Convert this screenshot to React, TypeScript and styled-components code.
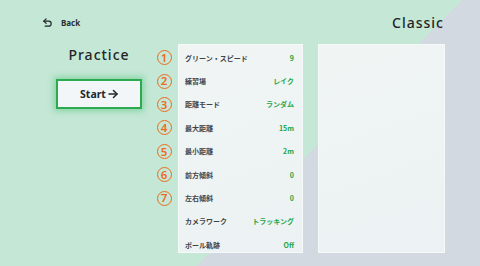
import React from 'react';
import styled, { createGlobalStyle } from 'styled-components';

const GlobalStyle = createGlobalStyle`
  html, body {
    margin: 0;
    padding: 0;
  }
  body {
    font-family: "Noto Sans", "Noto Sans CJK JP", sans-serif;
    color: #22272b;
  }
`;

const Page = styled.div`
  width: 480px;
  height: 266px;
  overflow: hidden;
  background: linear-gradient(135deg, #c4e7d6 0%, #c4e7d6 62%, #d2d9e0 62%, #d2d9e0 100%);
  display: flex;
  flex-direction: column;
`;

const Header = styled.div`
  height: 44px;
  display: flex;
  align-items: center;
  justify-content: space-between;
  padding: 0 36px 0 42px;
`;

const BackButton = styled.div`
  display: flex;
  align-items: center;
  gap: 8px;
  font-size: 8px;
  font-weight: 700;
  color: #2a2f33;
`;

const ModeTitle = styled.div`
  font-size: 14px;
  font-weight: 500;
  letter-spacing: 1px;
  color: #1f2428;
`;

const Body = styled.div`
  display: flex;
  padding-left: 56px;
`;

const StartColumn = styled.div`
  width: 86px;
  display: flex;
  flex-direction: column;
  align-items: center;
  margin-right: 14px;
`;

const SectionTitle = styled.div`
  font-size: 14px;
  font-weight: 500;
  letter-spacing: 1px;
  line-height: 20px;
  margin-top: 1px;
  color: #1f2428;
`;

const StartButton = styled.button`
  margin-top: 14px;
  width: 86px;
  height: 30px;
  background: #f3f6f8;
  border: 2px solid #2daa4f;
  box-shadow: 0 0 6px 2px rgba(60, 190, 100, 0.45);
  font-family: "Noto Sans", sans-serif;
  font-size: 10.5px;
  font-weight: 700;
  color: #22272b;
  display: flex;
  align-items: center;
  justify-content: center;
  gap: 2px;
  padding: 0;
`;

const NumberColumn = styled.div`
  width: 16px;
  padding-top: 2px;
  margin-right: 6px;
`;

const NumberSlot = styled.div`
  height: 23.4px;
  display: flex;
  align-items: center;
  justify-content: center;
`;

const NumberMark = styled.div`
  width: 15px;
  height: 15px;
  box-sizing: border-box;
  border: 1.8px solid #f06a1c;
  border-radius: 50%;
  display: flex;
  align-items: center;
  justify-content: center;
  font-family: "Noto Sans", sans-serif;
  font-size: 11.5px;
  font-weight: 600;
  line-height: 1;
  color: #f06a1c;
`;

const Panel = styled.div<{ $width: number }>`
  width: ${(p) => p.$width}px;
  height: 209px;
  box-sizing: border-box;
  background: linear-gradient(160deg, #f0f5f4 0%, #ecf1f3 100%);
  border: 1px solid #f6f9f9;
  padding-top: 1px;
  overflow: hidden;
  margin-right: 15px;
`;

const Row = styled.div`
  height: 23.4px;
  display: flex;
  align-items: center;
  justify-content: space-between;
  padding: 0 8px 0 6px;
  font-family: "Noto Sans CJK JP", sans-serif;
  font-size: 7px;
`;

const Label = styled.span`
  font-weight: 700;
  color: #3f444a;
`;

const Value = styled.span`
  font-weight: 700;
  color: #22a64a;
`;

const settings: [string, string][] = [
  ['グリーン・スピード', '9'],
  ['練習場', 'レイク'],
  ['距離モード', 'ランダム'],
  ['最大距離', '15m'],
  ['最小距離', '2m'],
  ['前方傾斜', '0'],
  ['左右傾斜', '0'],
  ['カメラワーク', 'トラッキング'],
  ['ボール軌跡', 'Off'],
];

const marks = [1, 2, 3, 4, 5, 6, 7];

const BackIcon = () => (
  <svg width="11" height="11" viewBox="0 0 24 24" fill="none" stroke="#1f2428" strokeWidth="2.6" strokeLinecap="round" strokeLinejoin="round">
    <path d="M9 14 4 9l5-5" />
    <path d="M4 9h10.5a5.5 5.5 0 0 1 5.5 5.5a5.5 5.5 0 0 1-5.5 5.5H7" />
  </svg>
);

const ArrowIcon = () => (
  <svg width="10" height="10" viewBox="0 0 10 10" fill="none" stroke="#22272b" strokeWidth="1.5" strokeLinecap="round" strokeLinejoin="round">
    <path d="M1 5h8" />
    <path d="M5.5 1.5 9 5 5.5 8.5" />
  </svg>
);

const App: React.FC = () => {
  return (
    <>
      <GlobalStyle />
      <Page>
        <Header>
          <BackButton>
            <BackIcon />
            <span>Back</span>
          </BackButton>
          <ModeTitle>Classic</ModeTitle>
        </Header>
        <Body>
          <StartColumn>
            <SectionTitle>Practice</SectionTitle>
            <StartButton>
              Start
              <ArrowIcon />
            </StartButton>
          </StartColumn>
          <NumberColumn>
            {marks.map((m) => (
              <NumberSlot key={m}>
                <NumberMark>{m}</NumberMark>
              </NumberSlot>
            ))}
          </NumberColumn>
          <Panel $width={125}>
            {settings.map(([label, value]) => (
              <Row key={label}>
                <Label>{label}</Label>
                <Value>{value}</Value>
              </Row>
            ))}
          </Panel>
          <Panel $width={127} />
        </Body>
      </Page>
    </>
  );
};

export default App;
